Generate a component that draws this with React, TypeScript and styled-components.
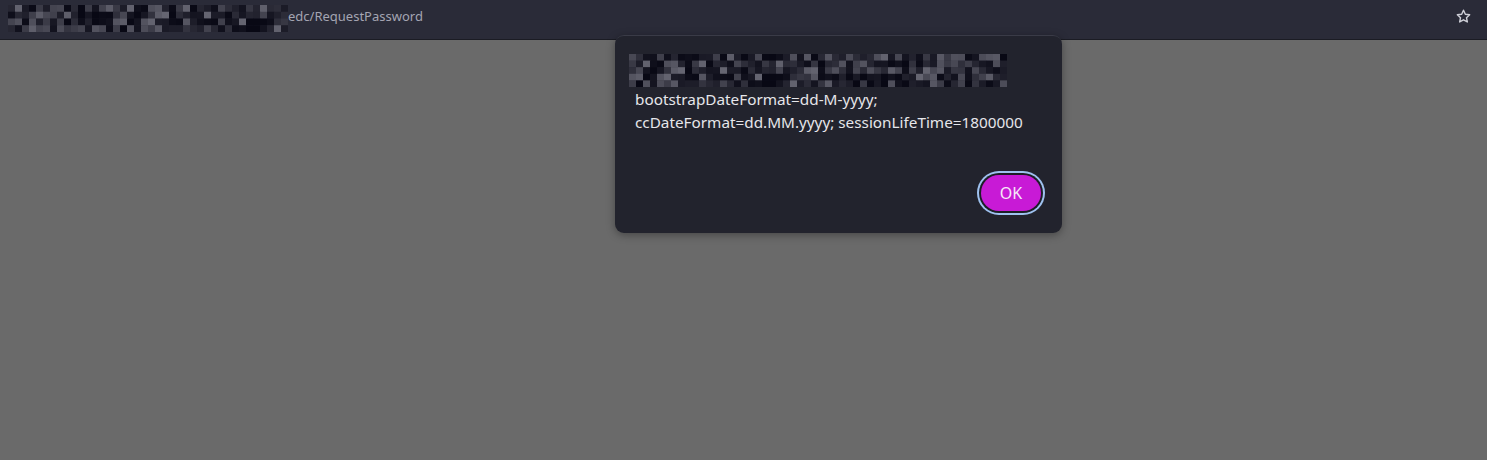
import React from 'react'
import styled, { createGlobalStyle } from 'styled-components'

const GlobalStyle = createGlobalStyle`
  html, body {
    margin: 0;
    padding: 0;
    background: #6a6a6a;
    font-family: "Noto Sans", "Open Sans", sans-serif;
  }
`

// deterministic shades for the pixelated (redacted) blocks
const shade = (seed: number) => {
  const x = Math.sin(seed * 12.9898) * 43758.5453
  const r = x - Math.floor(x)
  const v = Math.round(8 + r * r * 95)
  return `rgb(${v},${v},${v + 12})`
}

interface MosaicProps {
  cols: number;
  rows: number;
  cellW: number;
  cellH: number;
  seed: number;
}

const Mosaic = ({ cols, rows, cellW, cellH, seed }: MosaicProps) => {
  const cells = []
  for (let r = 0; r < rows; r++) {
    for (let c = 0; c < cols; c++) {
      cells.push(
        <rect
          key={`${r}-${c}`}
          x={c * cellW}
          y={r * cellH}
          width={cellW + 0.3}
          height={cellH + 0.3}
          fill={shade(seed + r * 97 + c * 7)}
        />
      )
    }
  }
  return (
    <svg width={cols * cellW} height={rows * cellH} style={{ display: 'block' }}>
      {cells}
    </svg>
  )
}

const App = () => {
  return (
    <Page>
      <GlobalStyle />
      <TopBar>
        <UrlBox>
          <Mosaic cols={40} rows={4} cellW={7} cellH={6.75} seed={3} />
          <UrlText>edc/RequestPassword</UrlText>
        </UrlBox>
        <Star viewBox="0 0 24 24">
          <path d="M12 3.2l2.6 5.6 6.1.7-4.5 4.2 1.2 6-5.4-3-5.4 3 1.2-6-4.5-4.2 6.1-.7z" />
        </Star>
      </TopBar>
      <Stage>
        <Dialog>
          <Mosaic cols={54} rows={5} cellW={7} cellH={6.6} seed={11} />
          <Message>
            bootstrapDateFormat=dd-M-yyyy;
            <br />
            ccDateFormat=dd.MM.yyyy; sessionLifeTime=1800000
          </Message>
          <Actions>
            <OkButton>OK</OkButton>
          </Actions>
        </Dialog>
      </Stage>
    </Page>
  )
}

export default App

const Page = styled.div`
  width: 1487px;
  height: 460px;
  background: #6a6a6a;
  overflow: hidden;
`

const TopBar = styled.div`
  height: 39px;
  background: #2a2b38;
  border-bottom: 1px solid #1b1c24;
  display: flex;
  align-items: center;
  justify-content: space-between;
  padding: 0 15px 0 8px;
  box-sizing: content-box;
`

const UrlBox = styled.div`
  display: flex;
  align-items: center;
  margin-top: -2px;
`

const UrlText = styled.span`
  color: #a4a5b2;
  font-size: 13px;
  margin-top: -5px;
`

const Star = styled.svg`
  width: 17px;
  height: 17px;
  fill: none;
  stroke: #cfd0d8;
  stroke-width: 2;
  stroke-linejoin: round;
  margin-top: -7px;
`

const Stage = styled.div`
  display: flex;
  padding-left: 615px;
`

const Dialog = styled.div`
  width: 447px;
  height: 198px;
  margin-top: -5px;
  box-sizing: border-box;
  padding: 18px 21px 22px 14px;
  background: #22232d;
  border-radius: 9px;
  border-top: 1px solid #3a3b47;
  box-shadow: 0 2px 8px rgba(0, 0, 0, 0.35);
  display: flex;
  flex-direction: column;
`

const Message = styled.div`
  color: #e6e6ea;
  font-size: 15.3px;
  line-height: 23px;
  padding-left: 6px;
  margin-top: 1px;
`

const Actions = styled.div`
  margin-top: auto;
  display: flex;
  justify-content: flex-end;
`

const OkButton = styled.button`
  width: 60px;
  height: 36px;
  border: none;
  border-radius: 18px;
  background: #c81ad6;
  color: #f6e8f8;
  font-family: "Noto Sans", "Open Sans", sans-serif;
  font-size: 16px;
  box-shadow: 0 0 0 2px #1d1e26, 0 0 0 4px #9fc2f0;
  cursor: pointer;
`
